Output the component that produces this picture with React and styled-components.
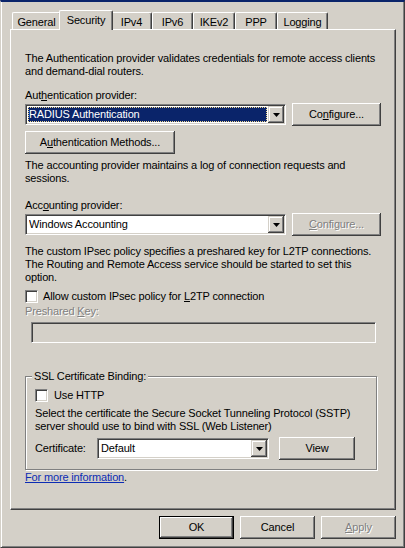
import React from "react";
import styled, { createGlobalStyle } from "styled-components";

const FACE = "#d4d0c8";
const LIGHT = "#ffffff";
const SHADOW = "#808080";
const DARK = "#404040";
const NAVY = "#0a246a";

const Global = createGlobalStyle`
  html, body { margin: 0; padding: 0; background: ${FACE}; }
  body { font-family: "Liberation Sans", Arial, sans-serif; font-size: 11px; }
  *, *::before, *::after { box-sizing: border-box; }
`;

const Window = styled.div`
  width: 405px;
  height: 548px;
  background: ${FACE};
  border-top: 2px solid ${NAVY};
  border-left: 1px solid ${FACE};
  border-right: 1px solid ${DARK};
  border-bottom: 1px solid ${DARK};
  box-shadow: inset 1px 0 ${LIGHT}, inset -1px -1px ${SHADOW};
  padding: 8px 8px 0 9px;
  display: flex;
  flex-direction: column;
  font-family: "Liberation Sans", Arial, sans-serif;
  font-size: 11px;
  line-height: 13px;
  letter-spacing: -0.15px;
  color: #000;
`;

const TabStrip = styled.div`
  display: flex;
  align-items: flex-end;
  height: 19px;
  margin-left: 2px;
  position: relative;
  z-index: 1;
`;

const Tab = styled.div`
  flex-shrink: 0;
  width: ${(p) => p.$w + (p.$active ? 4 : 0)}px;
  height: ${(p) => (p.$active ? 20 : 17)}px;
  margin: ${(p) => (p.$active ? "0 -2px -1px" : "0")};
  position: ${(p) => (p.$active ? "relative" : "static")};
  background: ${FACE};
  border-top: 1px solid ${LIGHT};
  border-left: 1px solid ${LIGHT};
  border-right: 1px solid ${DARK};
  border-radius: 2px 2px 0 0;
  box-shadow: inset -1px 0 ${SHADOW};
  padding-top: 3px;
  text-align: center;
  white-space: nowrap;
`;

const Panel = styled.div`
  height: 481px;
  border-top: 1px solid ${LIGHT};
  border-left: 1px solid ${LIGHT};
  border-right: 1px solid ${DARK};
  border-bottom: 1px solid ${DARK};
  box-shadow: inset -1px -1px ${SHADOW};
  padding: 22px 0 0 14px;
  display: flex;
  flex-direction: column;
  align-items: flex-start;
`;

const Para = styled.p`
  margin: ${(p) => p.$mt || 0}px 0 0 0;
  white-space: nowrap;
`;

const Label = styled.div`
  margin: ${(p) => p.$mt || 0}px 0 0 ${(p) => p.$ml || 0}px;
  white-space: nowrap;
  color: ${(p) => (p.$disabled ? SHADOW : "#000")};
  text-shadow: ${(p) => (p.$disabled ? `1px 1px 0 ${LIGHT}` : "none")};
  width: ${(p) => (p.$w ? `${p.$w}px` : "auto")};
  flex-shrink: 0;
`;

const U = styled.span`
  text-decoration: underline;
  text-underline-offset: 1px;
`;

const Row = styled.div`
  display: flex;
  align-items: center;
  gap: ${(p) => p.$gap || 0}px;
  margin-top: ${(p) => p.$mt || 0}px;
`;

const Button = styled.button`
  flex-shrink: 0;
  width: ${(p) => p.$w}px;
  height: 23px;
  margin: ${(p) => p.$mt || 0}px 0 0 ${(p) => p.$ml || 0}px;
  padding: 0;
  font: inherit;
  letter-spacing: inherit;
  line-height: 13px;
  color: ${(p) => (p.disabled ? SHADOW : "#000")};
  text-shadow: ${(p) => (p.disabled ? `1px 1px 0 ${LIGHT}` : "none")};
  background: ${FACE};
  border: ${(p) => (p.$default ? "1px solid #000" : "none")};
  box-shadow: inset -1px -1px ${DARK}, inset 1px 1px ${LIGHT},
    inset -2px -2px ${SHADOW}, inset 2px 2px ${FACE};
  white-space: nowrap;
`;

const Combo = styled.div`
  flex-shrink: 0;
  width: ${(p) => p.$w}px;
  height: 21px;
  display: flex;
  align-items: stretch;
  background: ${LIGHT};
  border-top: 1px solid ${SHADOW};
  border-left: 1px solid ${SHADOW};
  border-right: 1px solid ${LIGHT};
  border-bottom: 1px solid ${LIGHT};
  box-shadow: inset 1px 1px ${DARK}, inset -1px -1px ${FACE};
  padding: 1px;
`;

const ComboValue = styled.div`
  flex: 1;
  margin: 1px;
  border: 1px dotted ${(p) => (p.$focused ? "#f0d890" : "transparent")};
  background: ${(p) => (p.$focused ? NAVY : "transparent")};
  color: ${(p) => (p.$focused ? LIGHT : "#000")};
  line-height: 13px;
  white-space: nowrap;
  overflow: hidden;
`;

const DropButton = styled.div`
  width: 16px;
  flex-shrink: 0;
  background: ${FACE};
  box-shadow: inset -1px -1px ${DARK}, inset 1px 1px ${FACE},
    inset -2px -2px ${SHADOW}, inset 2px 2px ${LIGHT};
  display: flex;
  align-items: center;
  justify-content: center;
`;

const CheckBox = styled.div`
  flex-shrink: 0;
  width: 13px;
  height: 13px;
  background: ${LIGHT};
  border-top: 1px solid ${SHADOW};
  border-left: 1px solid ${SHADOW};
  border-right: 1px solid ${LIGHT};
  border-bottom: 1px solid ${LIGHT};
  box-shadow: inset 1px 1px ${DARK}, inset -1px -1px ${FACE};
`;

const TextBox = styled.div`
  width: ${(p) => p.$w}px;
  height: 21px;
  margin: ${(p) => p.$mt || 0}px 0 0 ${(p) => p.$ml || 0}px;
  background: ${FACE};
  border-top: 1px solid ${SHADOW};
  border-left: 1px solid ${SHADOW};
  border-right: 1px solid ${LIGHT};
  border-bottom: 1px solid ${LIGHT};
  box-shadow: inset 1px 1px ${DARK}, inset -1px -1px ${FACE};
`;

const Group = styled.section`
  width: 352px;
  margin-top: 33px;
  padding: 0 9px 9px 9px;
  border: 1px solid ${SHADOW};
  box-shadow: inset 1px 1px ${LIGHT}, 1px 1px ${LIGHT};
`;

const GroupTitle = styled.div`
  width: fit-content;
  margin: -7px 0 0 -3px;
  padding: 0 2px;
  line-height: 13px;
  background: ${FACE};
  white-space: nowrap;
`;

const LinkLine = styled.div`
  margin: 1px 0 0 0;
  white-space: nowrap;
`;

const Link = styled.a`
  color: #0c2cb4;
  text-decoration: underline;
  text-underline-offset: 1px;
  cursor: pointer;
`;

const Footer = styled.div`
  display: flex;
  justify-content: flex-end;
  gap: 6px;
  margin-top: 6px;
`;

const Arrow = () => (
  <svg width="7" height="4" viewBox="0 0 7 4">
    <polygon points="0,0 7,0 3.5,4" fill="#000" />
  </svg>
);

const ComboBox = ({ w, value, focused }) => (
  <Combo $w={w}>
    <ComboValue $focused={focused}>{value}</ComboValue>
    <DropButton>
      <Arrow />
    </DropButton>
  </Combo>
);

const tabs = [
  { label: "General", w: 49 },
  { label: "Security", w: 50, active: true },
  { label: "IPv4", w: 41 },
  { label: "IPv6", w: 41 },
  { label: "IKEv2", w: 42 },
  { label: "PPP", w: 42 },
  { label: "Logging", w: 51 },
];

export default function App() {
  return (
    <>
      <Global />
      <Window>
        <TabStrip>
          {tabs.map((t) => (
            <Tab key={t.label} $w={t.w} $active={t.active}>
              {t.label}
            </Tab>
          ))}
        </TabStrip>
        <Panel>
          <Para>
            The Authentication provider validates credentials for remote access clients
            <br />
            and demand-dial routers.
          </Para>
          <Label $mt={11}>
            Aut<U>h</U>entication provider:
          </Label>
          <Row $mt={1} $gap={6}>
            <ComboBox w={261} value="RADIUS Authentication" focused />
            <Button $w={89}>
              Co<U>n</U>figure...
            </Button>
          </Row>
          <Button $w={150} $mt={5}>
            A<U>u</U>thentication Methods...
          </Button>
          <Para $mt={5}>
            The accounting provider maintains a log of connection requests and
            <br />
            sessions.
          </Para>
          <Label $mt={14}>
            Acc<U>o</U>unting provider:
          </Label>
          <Row $mt={1} $gap={6}>
            <ComboBox w={261} value="Windows Accounting" />
            <Button $w={89} disabled>
              <U>C</U>onfigure...
            </Button>
          </Row>
          <Para $mt={9}>
            The custom IPsec policy specifies a preshared key for L2TP connections.
            <br />
            The Routing and Remote Access service should be started to set this
            <br />
            option.
          </Para>
          <Row $mt={6} $gap={5}>
            <CheckBox />
            <Label>
              Allow custom IPsec policy for <U>L</U>2TP connection
            </Label>
          </Row>
          <Label $mt={2} $disabled>
            Preshared <U>K</U>ey:
          </Label>
          <TextBox $w={345} $mt={4} $ml={6} />
          <Group>
            <GroupTitle>SSL Certificate Binding:</GroupTitle>
            <Row $mt={6} $gap={6}>
              <CheckBox />
              <Label>Use HTTP</Label>
            </Row>
            <Para $mt={5}>
              Select the certificate the Secure Socket Tunneling Protocol (SSTP)
              <br />
              server should use to bind with SSL (Web Listener)
            </Para>
            <Row $mt={4}>
              <Label $w={62}>Certificate:</Label>
              <ComboBox w={172} value="Default" />
              <Button $w={76} $ml={10}>
                View
              </Button>
            </Row>
          </Group>
          <LinkLine>
            <Link>For more information</Link>.
          </LinkLine>
        </Panel>
        <Footer>
          <Button $w={75} $default>
            OK
          </Button>
          <Button $w={75}>Cancel</Button>
          <Button $w={75} disabled>
            <U>A</U>pply
          </Button>
        </Footer>
      </Window>
    </>
  );
}
